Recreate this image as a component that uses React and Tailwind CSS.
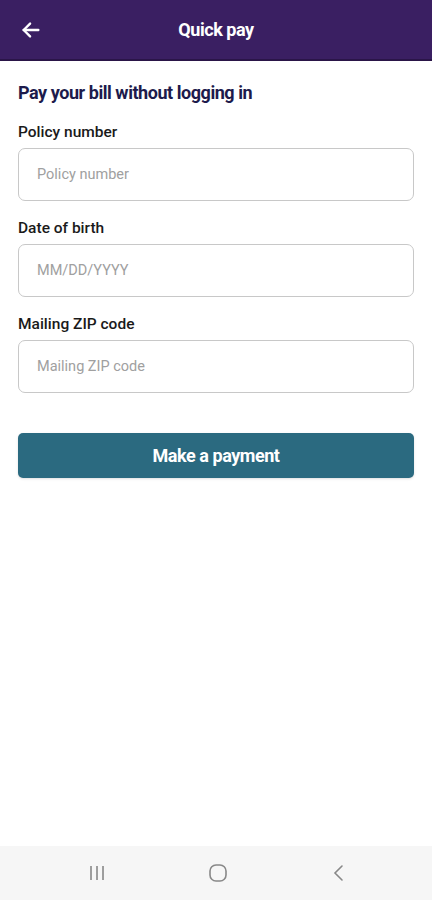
import React from 'react';

const fields = [
    { label: 'Policy number', placeholder: 'Policy number' },
    { label: 'Date of birth', placeholder: 'MM/DD/YYYY' },
    { label: 'Mailing ZIP code', placeholder: 'Mailing ZIP code' },
];

const App = () => {
    return (
        <div className="w-[432px] h-[900px] flex flex-col bg-white font-['Roboto',sans-serif]">
            <header className="h-[61px] bg-[#3a1f62] border-b-2 border-[#2a1548] flex items-center relative shrink-0">
                <button className="absolute left-[20px] top-[19px] text-white">
                    <svg width="22" height="22" viewBox="0 0 24 24" fill="none" stroke="currentColor" strokeWidth="2.6" strokeLinecap="round" strokeLinejoin="round">
                        <path d="M20 12H4" />
                        <path d="M11 5l-7 7 7 7" />
                    </svg>
                </button>
                <h1 className="flex-1 text-center text-white text-[18px] font-bold tracking-tight">Quick pay</h1>
            </header>

            <main className="flex-1 px-[18px] pt-[20px]">
                <h2 className="text-[#1d1b4c] text-[18px] font-bold leading-[24px] tracking-tight">Pay your bill without logging in</h2>
                <div className="mt-[17px] flex flex-col gap-[17px]">
                    {fields.map((f) => (
                        <div key={f.label}>
                            <label className="block text-[#1a1a1a] text-[15.5px] font-medium leading-[20px] mb-[6px]">{f.label}</label>
                            <input
                                placeholder={f.placeholder}
                                className="w-full h-[53px] rounded-[7px] border border-[#c8c8c8] px-[18px] text-[14.5px] placeholder:text-[#a0a0a0] outline-none"
                            />
                        </div>
                    ))}
                </div>
                <button className="mt-[40px] w-full h-[45px] rounded-[5px] bg-[#2b6a80] text-white text-[18px] font-bold tracking-tight shadow-sm">
                    Make a payment
                </button>
            </main>

            <nav className="h-[54px] bg-[#f6f6f6] flex items-center pl-[85px] gap-[97px] shrink-0">
                <svg width="24" height="20" viewBox="0 0 24 20" stroke="#888" strokeWidth="1.6">
                    <path d="M6 3v14M12 3v14M18 3v14" />
                </svg>
                <svg width="24" height="22" viewBox="0 0 24 22" fill="none" stroke="#888" strokeWidth="1.6">
                    <rect x="4" y="3" width="16" height="16" rx="6" />
                </svg>
                <svg width="24" height="20" viewBox="0 0 24 20" fill="none" stroke="#888" strokeWidth="1.6" strokeLinecap="round">
                    <path d="M15 3l-7 7 7 7" />
                </svg>
            </nav>
        </div>
    );
};

export default App;
